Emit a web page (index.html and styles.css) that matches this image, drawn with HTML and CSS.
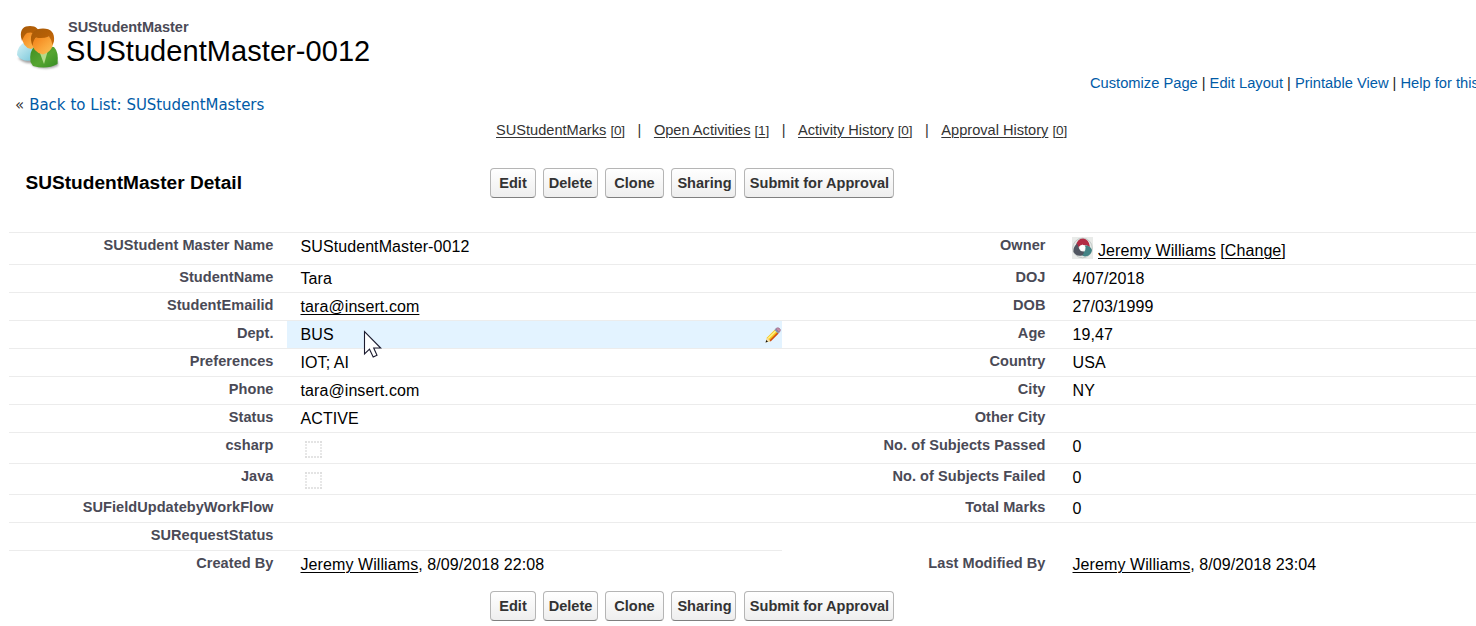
FILE: index.html
```html
<!DOCTYPE html>
<html lang="en">
<head>
<meta charset="utf-8">
<title>SUStudentMaster: SUStudentMaster-0012</title>
<link rel="stylesheet" href="styles.css">
</head>
<body>
<header class="page-head">
  <svg class="head-icon" viewBox="0 0 44 47" width="44" height="47">
    <defs>
      <linearGradient id="hair" x1="0" y1="0" x2="1" y2="1"><stop offset="0" stop-color="#a65a08"/><stop offset=".5" stop-color="#b55f06"/><stop offset="1" stop-color="#cf7010"/></linearGradient>
      <linearGradient id="face" x1="0" y1="0" x2="1" y2="1"><stop offset="0" stop-color="#f07a12"/><stop offset=".6" stop-color="#fba83c"/><stop offset="1" stop-color="#f9c45a"/></linearGradient>
      <linearGradient id="blue" x1="0" y1="0" x2="1" y2="1"><stop offset="0" stop-color="#d9f3f6"/><stop offset="1" stop-color="#6fc3d8"/></linearGradient>
      <linearGradient id="green" x1="0" y1="0" x2="1" y2="1"><stop offset="0" stop-color="#3f8c20"/><stop offset=".55" stop-color="#56a531"/><stop offset="1" stop-color="#358c22"/></linearGradient>
      <filter id="soft" x="-20%" y="-50%" width="140%" height="200%"><feGaussianBlur stdDeviation="1"/></filter>
    </defs>
    <path d="M2 34Q8 40 15 39L17 42Q30 47 42 42L42 37L12 31Z" fill="#666" opacity=".6" filter="url(#soft)"/>
    <path d="M1 31Q1 22 9 18L22 23L18 36Q6 39 1 31Z" fill="url(#blue)"/>
    <path d="M5.500 12Q7 24 15 25Q23 23 23 10Q15 4 5.500 12Z" fill="url(#face)"/>
    <path d="M5 13C4 5 8 2 14 2C20 2 24 5 23 12Q17 7 11 9Q8 11 6 17Z" fill="url(#hair)"/>
    <path d="M14.500 38Q13 27 19 22L38 23Q43 28 41.500 40Q31 46 17 42Z" fill="url(#green)"/>
    <path d="M23.500 28L28 40L31.500 28Z" fill="#b5db8c"/>
    <path d="M16 17Q16 28 27 30.500Q38 27 37.500 15Q27 7 16 17Z" fill="url(#face)"/>
    <path d="M15.500 19C13 9 19 4.500 27 4.500C35 4.500 39 9 38 17L36.500 21Q36 16 33 12.500Q26 15 20 13.500Q17 16 16.500 22Z" fill="url(#hair)"/>
  </svg>
  <div class="head-titles">
    <h1 class="type-name">SUStudentMaster</h1>
    <h2 class="record-name">SUStudentMaster-0012</h2>
  </div>
</header>
<nav class="page-links"><a>Customize Page</a><i>|</i><a>Edit Layout</a><i>|</i><a>Printable View</a><i>|</i><a>Help for this Page</a></nav>
<div class="back">« <a>Back to List: SUStudentMasters</a></div>
<nav class="related">
  <a><u>SUStudentMarks</u> <small>[<u>0</u>]</small></a><i>|</i>
  <a><u>Open Activities</u> <small>[<u>1</u>]</small></a><i>|</i>
  <a><u>Activity History</u> <small>[<u>0</u>]</small></a><i>|</i>
  <a><u>Approval History</u> <small>[<u>0</u>]</small></a>
</nav>
<section class="detail-head">
  <h3 class="detail-title">SUStudentMaster Detail</h3>
  <div class="buttons"><button class="b-edit">Edit</button><button class="b-delete">Delete</button><button class="b-clone">Clone</button><button class="b-sharing">Sharing</button><button class="b-submit">Submit for Approval</button></div>
</section>
<main class="details">
  <div class="row row-owner"><b>SUStudent Master Name</b><span>SUStudentMaster-0012</span><b>Owner</b><span class="owner">
    <svg class="avatar" viewBox="0 0 21 22" width="21" height="22">
      <rect width="21" height="22" fill="#e9ebe9"/><circle cx="10.500" cy="11" r="9.800" fill="#e3e7e5" stroke="#c3cac7"/>
      <path d="M4 9Q5 1.500 11 1.500Q17 2 18 10Q14 7.500 11 8Q8 8 6.500 10Z" fill="#b22d45"/>
      <path d="M13 8.500Q18 8 20 13Q19 19 13 19.500Q9 19 8 15Q13 16 13.500 12Z" fill="#438485"/>
      <path d="M5 6.500Q1 10 1.500 15Q5 20 10 18.500Q12 17 12 14.500Q8 15 7 11Z" fill="#515661"/>
      <path d="M10.500 7.500L13.500 10L12.500 13.500L9.500 14L7.500 11.500L8 9Z" fill="#fff"/>
    </svg><span><u>Jeremy Williams</u> [<u>Change</u>]</span></span></div>
  <div class="row"><b>StudentName</b><span>Tara</span><b>DOJ</b><span>4/07/2018</span></div>
  <div class="row"><b>StudentEmailid</b><span><u>tara@insert.com</u></span><b>DOB</b><span>27/03/1999</span></div>
  <div class="row"><b>Dept.</b><span class="active">BUS
    <svg class="pencil" viewBox="0 0 16 16" width="16" height="16"><path d="M.8 15.200L2 10.500L10 2.500L13.500 6L5.500 14Z" fill="#f6c51c"/><path d="M3.200 11.500L11 3.700" stroke="#fff08a" stroke-width="1.600"/><path d="M5 14L13 6" stroke="#cf4a12" stroke-width="1.700"/><path d="M.5 15.500L2 10.800L5.200 14Z" fill="#f8dfa9"/><path d="M.5 15.500L1.300 13L3 14.700Z" fill="#111"/><path d="M9.500 3L11 1.500L14.500 5L13 6.500Z" fill="#7f93b5"/><path d="M10.800 1.700Q12 .3 14 1Q16.200 2.500 15 4.500L14 5.200Z" fill="#c58ca7" stroke="#8e6687" stroke-width=".6"/></svg>
    <svg class="cursor" viewBox="0 0 19 28" width="19" height="28"><path d="M1.500 1.500V24L6.500 19.200L10.200 27L14 25.200L10.700 18H17.700Z" fill="#fff" stroke="#1c1c30" stroke-width="1.100"/></svg>
  </span><b>Age</b><span>19,47</span></div>
  <div class="row"><b>Preferences</b><span>IOT; AI</span><b>Country</b><span>USA</span></div>
  <div class="row"><b>Phone</b><span>tara@insert.com</span><b>City</b><span>NY</span></div>
  <div class="row"><b>Status</b><span>ACTIVE</span><b>Other City</b><span></span></div>
  <div class="row row-check"><b>csharp</b><span><svg class="check" width="17" height="17"><path d="M0 1H17M0 16H17M1 0V17M16 0V17"/></svg></span><b>No. of Subjects Passed</b><span>0</span></div>
  <div class="row row-check"><b>Java</b><span><svg class="check" width="17" height="17"><path d="M0 1H17M0 16H17M1 0V17M16 0V17"/></svg></span><b>No. of Subjects Failed</b><span>0</span></div>
  <div class="row"><b>SUFieldUpdatebyWorkFlow</b><span></span><b>Total Marks</b><span>0</span></div>
  <div class="row row-half"><b>SURequestStatus</b><span></span></div>
  <div class="row row-last"><b>Created By</b><span><u>Jeremy Williams</u>, 8/09/2018 22:08</span><b>Last Modified By</b><span><u>Jeremy Williams</u>, 8/09/2018 23:04</span></div>
</main>
<footer class="foot">
  <div class="buttons"><button class="b-edit">Edit</button><button class="b-delete">Delete</button><button class="b-clone">Clone</button><button class="b-sharing">Sharing</button><button class="b-submit">Submit for Approval</button></div>
</footer>
</body>
</html>
```
FILE: styles.css
```css
* { box-sizing: border-box; }
body { margin: 0; background: #fff; color: #000; font: 16px/20px "Liberation Sans", Arial, sans-serif; width: 1476px; height: 626px; overflow: hidden; }
h1, h2, h3 { margin: 0; }
i { font-style: normal; }
u { text-underline-offset: 2px; text-decoration-thickness: 1px; }

.page-head { display: flex; height: 73px; padding: 24px 0 0 16px; }
.head-icon { flex: none; margin-left: -.5px; }
.head-titles { padding-left: 6.5px; margin-top: -6px; }
.type-name { font-size: 14.56px; line-height: 18px; color: #4a4a56; margin-left: 2px; letter-spacing: -.05px; }
.record-name { font-size: 29px; line-height: 32px; font-weight: 400; margin-top: -1px; letter-spacing: .06px; }

.page-links { display: flex; gap: 4px; height: 20px; padding-left: 1090px; font-size: 14.7px; white-space: nowrap; }
.page-links a { color: #015ba7; }
.page-links i { width: 4.8px; color: #222; }

.back { height: 24px; padding: 2px 0 0 15px; font: 15px/20px "DejaVu Sans", Verdana, sans-serif; color: #333; word-spacing: .3px; letter-spacing: -.05px; }
.back a { color: #015ba7; }

.related { display: flex; height: 51px; padding: 3px 0 0 496px; font-size: 14.6px; color: #333; white-space: nowrap; }
.related small { font-size: 13.6px; letter-spacing: -.2px; }
.related i { width: 29px; text-align: center; }

.detail-head { display: flex; height: 64px; }
.detail-title { width: 490px; padding: 5px 0 0 25.5px; font-size: 19.1px; line-height: 20px; }
.buttons { display: flex; }
.buttons button { height: 30px; padding: 0 0 1px; border: 1px solid #b5b5b5; border-bottom-color: #7f7f7f; border-radius: 4px; background: linear-gradient(#fff, #eee); color: #333; font: bold 14.55px/20px "Liberation Sans", Arial, sans-serif; white-space: nowrap; }
.b-edit { width: 46px; margin-right: 7px; }
.b-delete { width: 55px; margin-right: 7px; }
.b-clone { width: 59px; margin-right: 7px; }
.buttons .b-sharing { width: 65px; margin-right: 8px; padding-left: 2px; }
.buttons .b-submit { width: 150px; padding-left: 1px; }

.details { margin-left: 9px; border-top: 1px solid #ececec; }
.row { display: grid; grid-template-columns: 278px 495px 277px 1fr; height: 28px; border-bottom: 1px solid #ececec; }
.row > b { padding: 2px 13.5px 0 0; text-align: right; font-size: 14.56px; line-height: 20px; letter-spacing: .05px; color: #4a4a56; }
.row > span { padding: 4px 0 0 13.5px; letter-spacing: .085px; }
.row-owner { height: 32px; }
.row-check { height: 31px; }
.row-half { width: 773px; }
.row-last { border-bottom: 0; }
.row > .owner { display: flex; padding-left: 13px; }
.owner > span { margin: 4px 0 0 5px; }
.avatar { flex: none; }
.active { position: relative; background: #e3f3ff; }
.pencil { position: absolute; left: 478px; top: 6px; }
.cursor { position: absolute; left: 76px; top: 9px; z-index: 1; }
.check { display: block; margin: 4px 0 0 4.5px; }
.check path { fill: none; stroke: #dcdcdc; stroke-width: 1.3; stroke-dasharray: 2 1; }

.foot { padding: 12px 0 0 490px; }
```
